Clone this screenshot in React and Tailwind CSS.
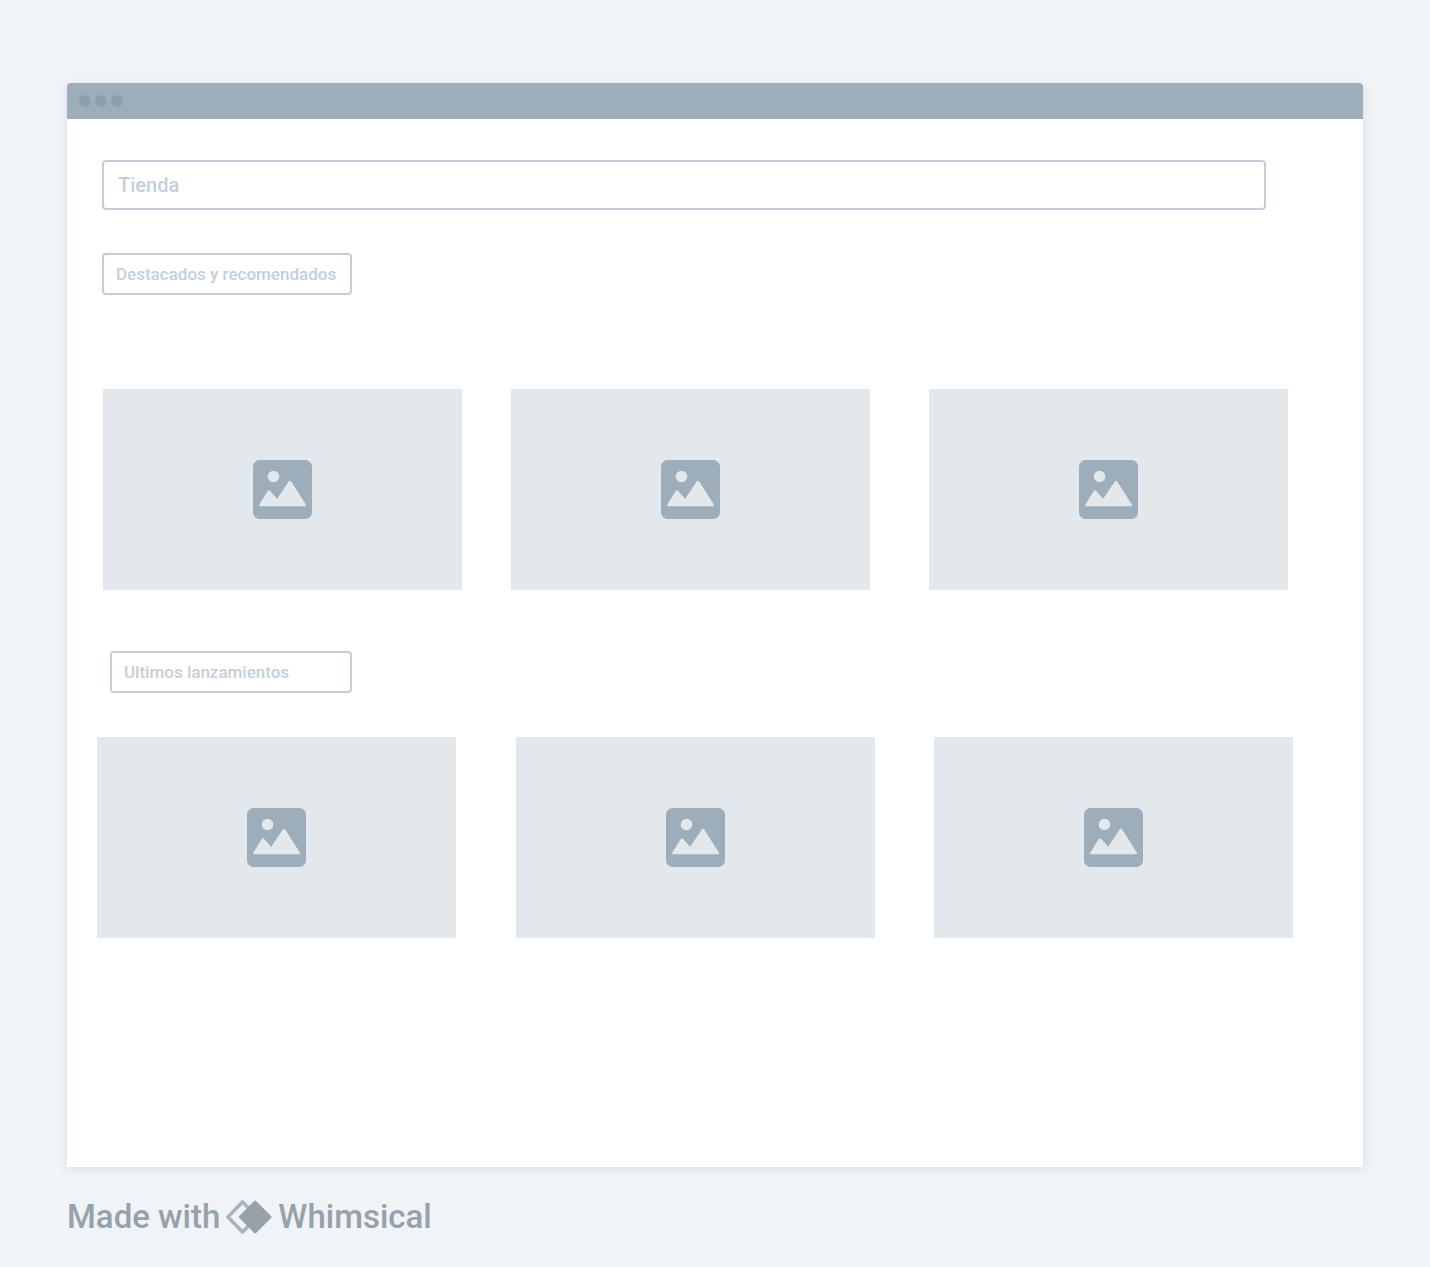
import React from "react";

function Picture({ label }) {
  return (
    <div
      role="img"
      aria-label={label}
      className="flex h-[201px] min-w-0 flex-1 items-center justify-center bg-[#e2e8ec]"
    >
      <svg viewBox="0 0 59 59" className="size-[59px]" aria-hidden="true">
        <rect width="59" height="59" rx="6.5" fill="#9eadba" />
        <circle cx="20.5" cy="16.5" r="5.8" fill="#e2e8ec" />
        <path
          d="M6.4 44.4 L14.6 31.2 Q15.8 29.4 17.2 31 L24.2 38.8 L35.7 21.6 Q37 19.9 38.2 21.6 L52.8 44.4 Q53.6 46.3 51.8 46.3 H7.4 Q5.4 46.3 6.4 44.4 Z"
          fill="#e2e8ec"
        />
      </svg>
    </div>
  );
}

const field =
  "block rounded-[4px] border-2 border-[#c3ced8] bg-white font-medium text-[#c3d0db] placeholder:text-[#c3d0db] placeholder:opacity-100 outline-none";

export default function App() {
  return (
    <div className="min-h-screen bg-[#f0f4f7] px-[67px] pt-[83px] pb-6 font-['Roboto',sans-serif]">
      <main className="rounded-t-[4px] bg-white pb-[229px] shadow-[0_2px_10px_rgba(100,120,135,0.16)]">
        <div className="flex h-9 items-center gap-1 rounded-t-[4px] bg-[#9eadba] px-3">
          <span className="size-3 rounded-full bg-[#8e9eac]" />
          <span className="size-3 rounded-full bg-[#8e9eac]" />
          <span className="size-3 rounded-full bg-[#8e9eac]" />
        </div>

        <div className="pt-[41px] pr-[97px] pl-[35px]">
          <input
            type="text"
            aria-label="Tienda"
            placeholder="Tienda"
            className={`${field} h-[50px] w-full px-3.5 text-[20px]`}
          />
          <input
            type="text"
            aria-label="Destacados y recomendados"
            placeholder="Destacados y recomendados"
            className={`${field} mt-[43px] h-[42px] w-[250px] px-3 text-[17px]`}
          />
        </div>

        <section className="mt-[94px] flex pr-[75px] pl-9">
          <Picture label="Destacado 1" />
          <div className="w-[49px]" />
          <Picture label="Destacado 2" />
          <div className="w-[59px]" />
          <Picture label="Destacado 3" />
        </section>

        <div className="mt-[61px] pl-[43px]">
          <input
            type="text"
            aria-label="Ultimos lanzamientos"
            placeholder="Ultimos lanzamientos"
            className={`${field} h-[42px] w-[242px] px-3 text-[17px]`}
          />
        </div>

        <section className="mt-11 flex pr-[70px] pl-[30px]">
          <Picture label="Lanzamiento 1" />
          <div className="w-[60px]" />
          <Picture label="Lanzamiento 2" />
          <div className="w-[59px]" />
          <Picture label="Lanzamiento 3" />
        </section>
      </main>

      <footer className="mt-8 flex h-9 items-center gap-1.5 text-[33px] leading-9 font-medium whitespace-nowrap text-[#96a1aa]">
        <span>Made with</span>
        <svg viewBox="0 0 46 34" className="h-[34px] w-[46px]" aria-hidden="true">
          <path
            d="M16.5 2 L31.5 17 L16.5 32 L1.9 17 Z"
            fill="none"
            stroke="#a9b4bc"
            strokeWidth="3.6"
            strokeLinejoin="round"
          />
          <path
            d="M29.2 1.5 L44.6 17 L29.2 32.5 L13.8 17 Z"
            fill="#96a1aa"
            stroke="#96a1aa"
            strokeWidth="2"
            strokeLinejoin="round"
          />
        </svg>
        <span>Whimsical</span>
      </footer>
    </div>
  );
}
